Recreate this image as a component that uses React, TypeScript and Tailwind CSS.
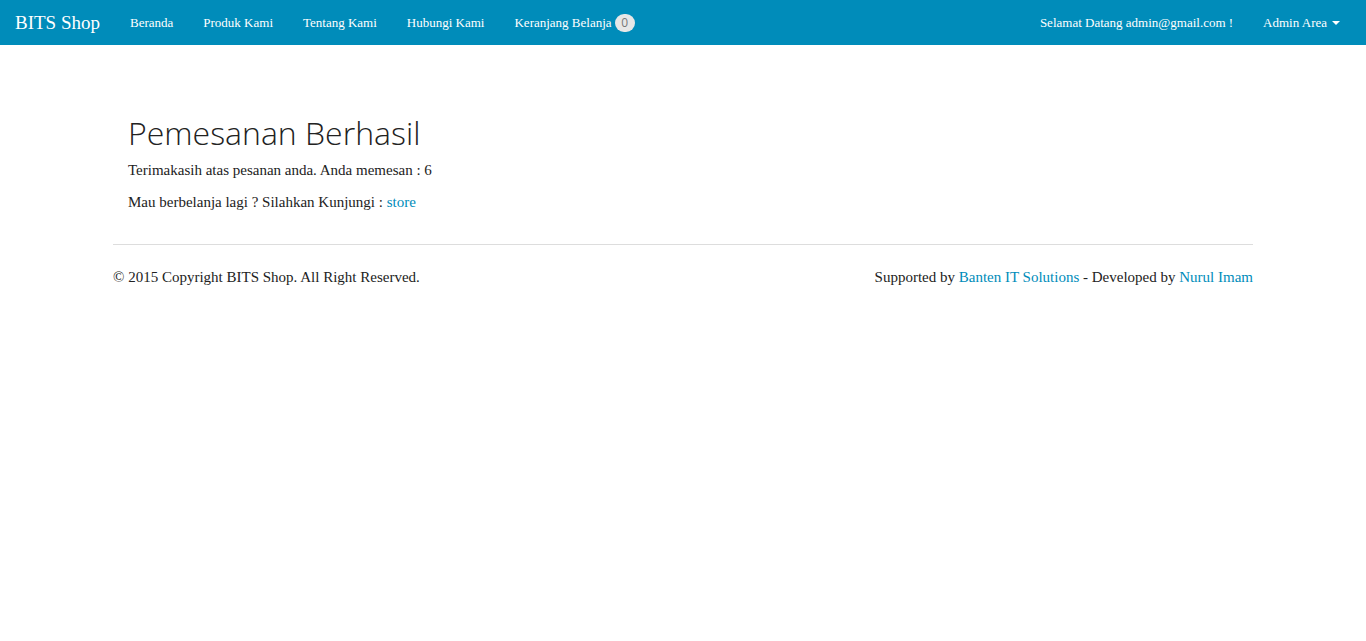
import React from "react";

const navLinks = ["Beranda", "Produk Kami", "Tentang Kami", "Hubungi Kami"];

const App: React.FC = () => {
  return (
    <div className="min-h-screen bg-white text-[#222] font-['Liberation_Serif',serif]">
      {/* Navbar */}
      <nav className="h-[45px] bg-[#008cba] flex items-center justify-between text-white">
        <div className="flex items-center h-full">
          <a className="px-[15px] text-[19px] leading-[45px]">BITS Shop</a>
          {navLinks.map((l) => (
            <a key={l} className="px-[15px] text-[13px] leading-[45px]">
              {l}
            </a>
          ))}
          <a className="px-[15px] text-[13px] leading-[45px] flex items-center gap-[3px]">
            Keranjang Belanja
            <span className="inline-flex items-center justify-center w-[20px] h-[18px] rounded-full bg-[#e7e7e7] text-[#777] text-[12px] font-['Open_Sans',sans-serif]">
              0
            </span>
          </a>
        </div>
        <div className="flex items-center h-full pr-[11px]">
          <a className="px-[15px] text-[13px] leading-[45px]">
            Selamat Datang admin@gmail.com !
          </a>
          <a className="px-[15px] text-[13px] leading-[45px] flex items-center gap-[5px]">
            Admin Area
            <span className="w-0 h-0 border-l-[4px] border-r-[4px] border-t-[4px] border-l-transparent border-r-transparent border-t-white" />
          </a>
        </div>
      </nav>

      {/* Content */}
      <div className="w-[1170px] mx-auto px-[15px]">
        <div className="px-[15px] pt-[70px]">
          <h1 className="font-['Open_Sans',sans-serif] font-light text-[32px] leading-[35px] mb-[10px]">
            Pemesanan Berhasil
          </h1>
          <p className="text-[15px] leading-[21px] mb-[11px]">
            Terimakasih atas pesanan anda. Anda memesan : 6
          </p>
          <p className="text-[15px] leading-[21px]">
            Mau berbelanja lagi ? Silahkan Kunjungi :{" "}
            <a className="text-[#008cba]">store</a>
          </p>
        </div>
        <hr className="mt-[31px] border-t border-[#dddddd]" />
        <footer className="flex justify-between pt-[22px] text-[15px] leading-[21px]">
          <p>© 2015 Copyright BITS Shop. All Right Reserved.</p>
          <p>
            Supported by <a className="text-[#008cba]">Banten IT Solutions</a> - Developed by{" "}
            <a className="text-[#008cba]">Nurul Imam</a>
          </p>
        </footer>
      </div>
    </div>
  );
};

export default App;
